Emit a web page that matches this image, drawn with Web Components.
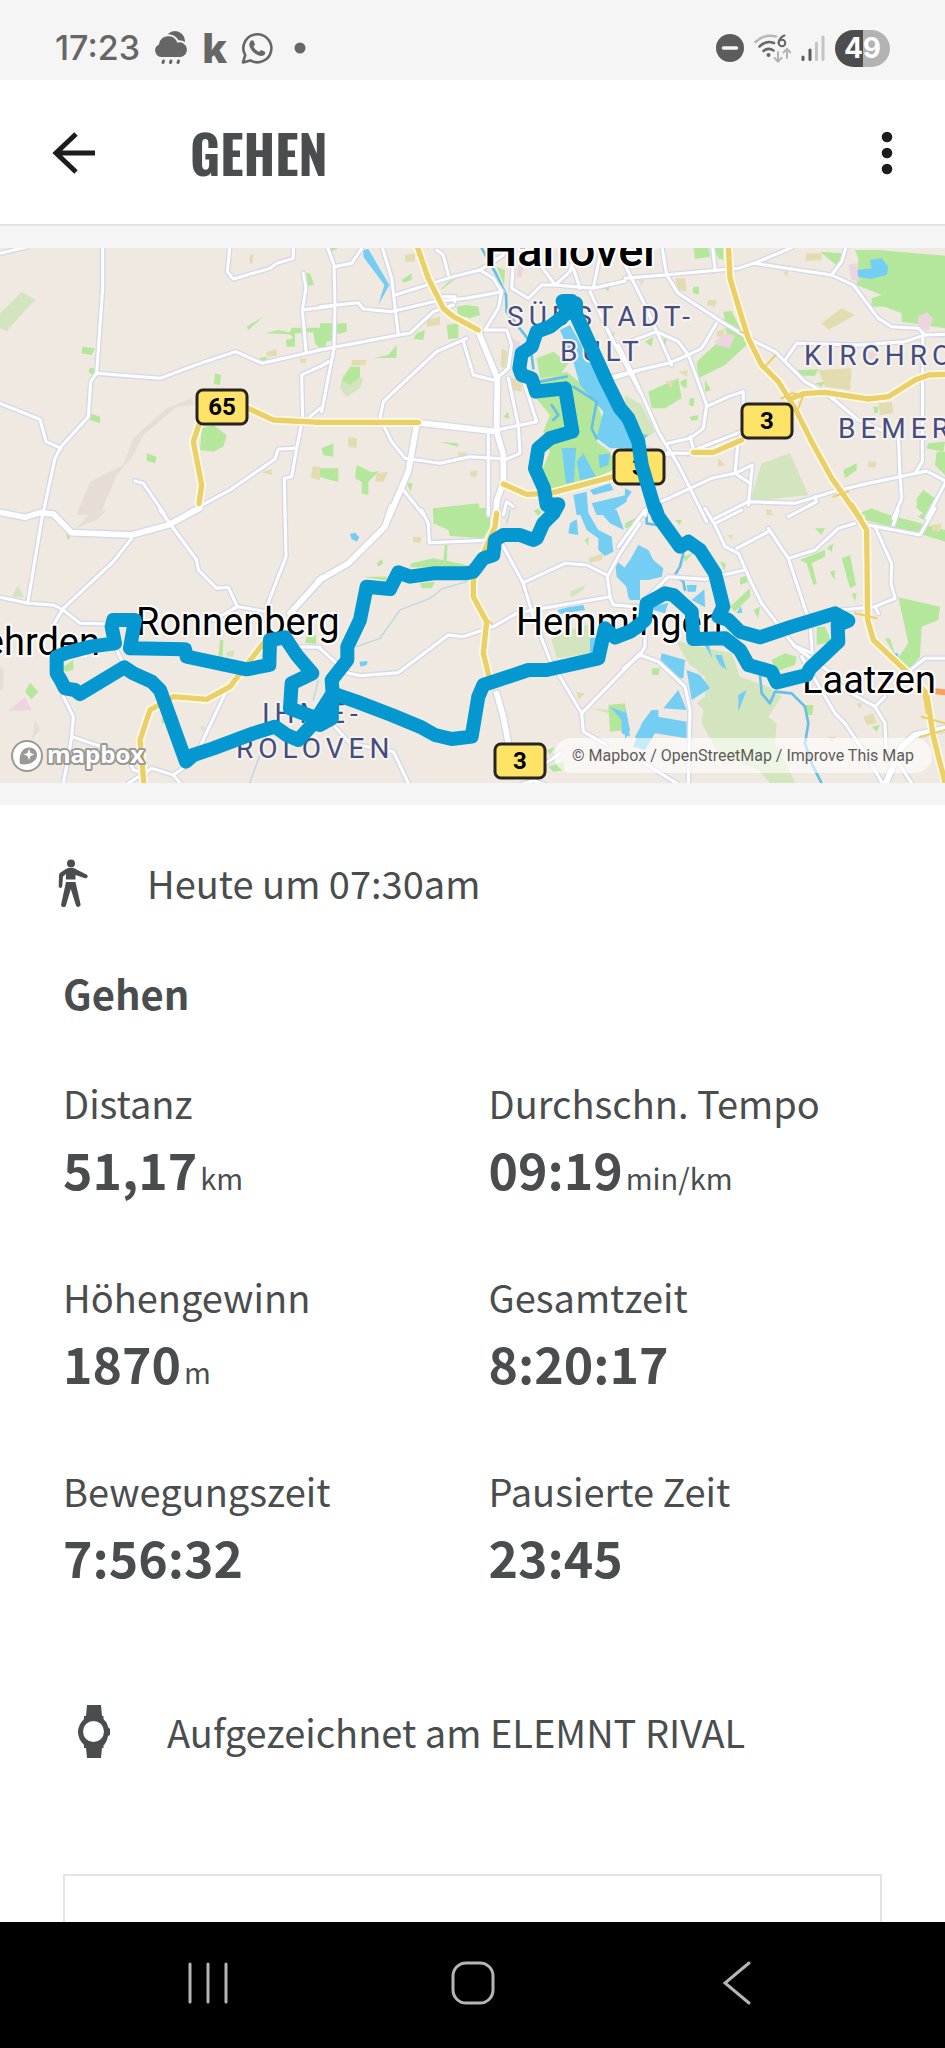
<!DOCTYPE html>
<html lang="de">
<head>
<meta charset="utf-8">
<meta name="viewport" content="width=device-width, initial-scale=1">
<title>Gehen</title>
<style>
    body {
        margin: 0;
        background: #fff;
        color: #4a4d4e;
        font-family: "Noto Sans CJK SC", "Noto Sans", sans-serif;
    }
</style>
</head>
<body>
<workout-page>
    <status-bar slot="status" time="17:23" battery="49"></status-bar>
    <app-bar slot="top">Gehen</app-bar>
    <route-map slot="map"></route-map>

    <icon-row icon="walk">Heute um 07:30am</icon-row>
    <workout-title>Gehen</workout-title>
    <stat-grid>
        <stat-item label="Distanz" unit="km">51,17</stat-item>
        <stat-item label="Durchschn. Tempo" unit="min/km">09:19</stat-item>
        <stat-item label="Höhengewinn" unit="m">1870</stat-item>
        <stat-item label="Gesamtzeit">8:20:17</stat-item>
        <stat-item label="Bewegungszeit">7:56:32</stat-item>
        <stat-item label="Pausierte Zeit">23:45</stat-item>
    </stat-grid>
    <icon-row icon="watch" class="device">Aufgezeichnet am ELEMNT RIVAL</icon-row>
    <peek-card></peek-card>

    <nav-bar slot="nav"></nav-bar>
</workout-page>

<script>
function attach(el, html) {
    const template = document.createElement('template');
    template.innerHTML = html;
    el.attachShadow({mode: 'open'});
    el.shadowRoot.appendChild(template.content.cloneNode(true));
}

class WorkoutPage extends HTMLElement {
    constructor() {
        super();
        attach(this, `
    <style>
    :host {
        display: flex;
        flex-direction: column;
        height: 100vh;
        overflow: hidden;
    }

    .map {
        background: #f5f5f5;
        padding: 22px 0;
    }

    main {
        display: flex;
        flex-direction: column;
        flex: 1;
        min-height: 0;
        overflow: hidden;
        padding: 50px 63px 0;
    }

    ::slotted(.device) {
        --icon-box: 62px;
        --icon-gap: 42px;
        margin-top: 113px;
    }
    </style>

    <slot name="status"></slot>
    <slot name="top"></slot>
    <div class="map"><slot name="map"></slot></div>
    <main><slot></slot></main>
    <slot name="nav"></slot>
`);
    }
}

class StatusBar extends HTMLElement {
    constructor() {
        super();
        attach(this, `
    <style>
    :host {
        display: flex;
        flex: none;
        justify-content: space-between;
        align-items: center;
        box-sizing: border-box;
        height: 80px;
        padding: 16px 55px 0;
        background: #f5f5f5;
        color: #666;
        font: 500 34px/40px Inter, sans-serif;
    }

    div {
        display: flex;
        align-items: center;
    }

    .left { gap: 14px; }
    .right { gap: 10px; }

    .k {
        font: 800 38px/40px "Open Sans", sans-serif;
    }

    .battery {
        justify-content: center;
        width: 55px;
        height: 37px;
        border-radius: 19px;
        background: linear-gradient(90deg, #4d4d4d 50%, #b3b3b3 50%);
        color: #fff;
        font-weight: 700;
        font-size: 28px;
    }
    </style>

    <div class="left">
        <span class="time"></span>
        <svg width="34" height="36" viewBox="0 0 34 36" fill="#666">
            <circle cx="21" cy="11" r="10"/>
            <path stroke="#f5f5f5" stroke-width="2" d="M8 28a7.500 7.500 0 0 1-4-14 10.500 10.500 0 0 1 20-2.500 8 8 0 0 1 3 16.500z"/>
            <path stroke="#666" stroke-width="3" stroke-linecap="round" d="M9.500 31l-.5 1.500M17 31l-.5 1.500M24.500 31l-.5 1.500"/>
        </svg>
        <span class="k">k</span>
        <svg width="32" height="32" viewBox="0 0 32 32">
            <path fill="none" stroke="#666" stroke-width="2.600" stroke-linejoin="round" d="M2 30.500l2.200-7.300a14 14 0 1 1 5.200 5.200z"/>
            <path fill="#666" d="M9 10c1-2 3-2.300 3.500-1.200l1.300 3c.3 1-.2 1.600-1.300 2.800 1.300 2.600 3 4.200 5.600 5.300 1.300-1.600 1.700-2 2.700-1.600l3 1.500c1 .7.300 2.500-1 3.500-2 1.400-5 .6-8-1.200-3-2-5-4.500-6-7-.8-2-.6-3.700.2-5.100z"/>
        </svg>
        <svg width="26" height="12" viewBox="0 0 26 12"><circle cx="13" cy="6" r="5.500" fill="#666"/></svg>
    </div>
    <div class="right">
        <svg width="28" height="28" viewBox="0 0 28 28">
            <circle cx="14" cy="14" r="14" fill="#5c5c5c"/>
            <path stroke="#f5f5f5" stroke-width="3.500" stroke-linecap="round" d="M7.500 14h13"/>
        </svg>
        <svg width="37" height="30" viewBox="0 0 37 30" fill="none" stroke-width="2.500" stroke-linecap="round">
            <path stroke="#b8b8b8" d="M1.500 9Q10 .5 22 3.500"/>
            <path stroke="#666" d="M5.500 13.500Q12 7 20 10M9.500 18Q14 14 19.500 17.500"/>
            <circle cx="14.500" cy="22" r="2" fill="#666"/>
            <path stroke="#666" stroke-width="2" d="M30.500 2.500q-5 2-6 7"/>
            <circle cx="28" cy="10" r="3.300" stroke="#666" stroke-width="2"/>
            <path stroke="#b3b3b3" stroke-width="2" d="M24 19v9M20.500 25l3.500 3.500 3.500-3.500M33 25v-8.500M29.500 19.500l3.500-3.500 3.500 3.500"/>
        </svg>
        <svg width="24" height="28" viewBox="0 0 24 28" stroke-width="3" stroke-linecap="round">
            <path stroke="#5c5c5c" d="M2 23v2.500M9 16v9.500"/>
            <path stroke="#c4c4c4" d="M15.500 9v16.500M22 3v22.500"/>
        </svg>
        <div class="battery"></div>
    </div>
`);
        this.shadowRoot.querySelector('.time').innerText = this.getAttribute('time');
        this.shadowRoot.querySelector('.battery').innerText = this.getAttribute('battery');
    }
}

class AppBar extends HTMLElement {
    constructor() {
        super();
        attach(this, `
    <style>
    :host {
        display: flex;
        flex: none;
        align-items: center;
        box-sizing: border-box;
        height: 146px;
        padding: 2px 34px 0 48px;
        border-bottom: 2px solid #e4e4e4;
        background: #fff;
    }

    button {
        display: flex;
        padding: 0;
        border: 0;
        background: none;
    }

    h1 {
        flex: 1;
        margin: 0 0 0 94px;
        font: 700 52px/64px Oswald, "Roboto Condensed", "Liberation Sans Narrow", sans-serif;
        text-transform: uppercase;
    }
    </style>

    <button aria-label="Zurück">
        <svg width="48" height="48" viewBox="0 0 48 48" fill="none" stroke="#1c1c1c" stroke-width="5">
            <path d="M47 24H9M28 5L8 24l20 19"/>
        </svg>
    </button>
    <h1><slot></slot></h1>
    <button aria-label="Mehr">
        <svg width="48" height="48" viewBox="0 0 48 48" fill="#1c1c1c">
            <circle cx="24" cy="8" r="5.300"/>
            <circle cx="24" cy="24" r="5.300"/>
            <circle cx="24" cy="40" r="5.300"/>
        </svg>
    </button>
`);
    }
}

// Map tiles. x/y is the tile origin on the map, points are in thirds of a map pixel.
const TILES = [
    {
        x: 0, y: 235,
        hill: ['575,490 500,520 400,610 370,690 270,740 230,840 300,840 350,720 400,660 430,600 530,515 580,510'],
        light: ['65,172 108,195 95,205 20,288 0,280 0,235'],
        green: [
            '247,335 285,340 275,360 245,355', '268,535 300,545 300,565 270,555', '268,400 282,398 280,420 266,412',
            '605,580 640,570 680,600 670,635 640,650 600,645', '645,415 663,420 660,450 642,447',
            '440,655 470,665 465,685 440,677', '740,275 790,245 745,285',
            '795,295 835,285 870,292 875,278 960,278 960,340 945,325 940,292 885,295 885,335 860,335 858,315 880,310 870,298',
            '918,115 930,115 942,150 925,152', '780,368 800,365 800,378 780,378'
        ],
        olive: ['800,350 830,342 830,362 800,365', '785,712 815,702 815,720', '938,695 960,695 960,735 932,728', '750,60 760,58 758,85 748,85', '900,370 920,372 915,385 902,385'],
        minor: [
            '0,55 80,36', '308,30 308,160 290,415 272,440 265,545 183,635 165,670 128,840',
            '290,415 480,430 600,385 707,350 787,385 960,345', '0,505 120,553 138,620 183,640',
            '690,30 682,110 700,132 810,100 830,85 880,70 880,30', '910,115 918,160 907,225 918,348',
            '907,225 1005,212', '980,385 905,420 908,550 890,640 875,725 853,730 855,840',
            '890,640 835,642 825,672 690,765 560,835', '405,738 430,745 495,840', '960,520 930,545'
        ],
        yellow: ['740,518 820,555 960,562', '600,560 580,620 605,750 597,805']
    },
    {
        x: 320, y: 235,
        light: ['70,420 130,430 120,460 80,485 60,460', '655,430 740,410 790,470 700,450'],
        green: [
            '0,265 80,265 80,290 40,300 40,315 20,320 15,340 0,335', '90,395 120,395 120,425 90,450 65,435',
            '160,370 205,360 230,330 230,368', '380,270 415,265 415,310 385,312', '290,295 315,285 310,315 280,312',
            '245,135 275,115 275,135 250,143', '110,690 155,712 178,708 145,740 145,780 125,775 125,740 105,730',
            '0,700 55,700 55,740 30,735 0,725', '340,820 475,805 485,840 340,840',
            '410,215 440,210 475,215 480,240 450,250 415,240', '650,370 700,350 745,385 720,420 660,430',
            '360,620 415,625 415,635', '5,640 40,625 40,665 10,660', '550,545 565,530 567,552', '25,39 55,39 35,50',
            '530,95 555,105 552,150', '860,300 885,290 880,308 862,308', '360,165 385,140 410,130 370,160', '845,155 870,152 865,168',
            '640,450 740,410 800,460 830,500 850,560 830,620 870,650 890,700 800,740 690,780 660,720 690,650 670,590 690,540 640,480',
            '260,745 278,745 272,770', '640,830 655,820 665,835'
        ],
        olive: [
            '95,375 140,375 135,390 95,392', '85,605 110,610 110,640 85,635', '170,715 205,710 190,740 165,740',
            '255,60 285,55 285,80 255,80', '450,710 472,705 470,725 452,725', '545,340 562,350 555,400 542,395',
            '320,255 360,245 360,270 320,275', '570,425 605,440 605,470 575,465', '415,652 440,652 440,670 415,670'
        ],
        pink: ['595,90 610,95 605,125 590,125', '565,305 600,320 600,345 575,340'],
        water: [
            '130,45 145,42 208,150 175,210 193,150 130,65', '720,285 750,270 960,640 870,640 830,610 850,530 780,450 760,380',
            '725,640 768,638 762,740 738,745', '770,680 790,655 828,725 780,735', '835,660 870,655 865,690 840,700',
            '760,780 800,770 805,840 770,840', '810,765 870,745 880,765 820,780', '815,805 918,780 920,800 860,840 830,840'
        ],
        stream: ['485,39 530,120 558,180 560,230 630,320 640,400', '695,510 715,540 700,555', '760,455 830,500 815,580 830,610', '660,440 740,425'],
        minor: [
            '20,30 42,90 45,210 42,340 5,530', '42,95 95,85 125,40', '0,215 115,203 130,222 215,230 340,200 440,190 545,170',
            '185,30 215,130 235,300', '0,345 235,300 270,295 340,230 400,210', '225,180 400,125 480,105 550,60',
            '350,45 370,60 385,120', '370,185 405,185 405,200', '480,105 520,130 545,170', '575,160 625,190 665,150 705,150',
            '580,80 575,160', '705,150 750,110 770,30', '640,60 665,95 705,150', '705,150 820,160 915,138', '820,160 840,60',
            '760,100 780,160', '545,170 535,220 495,285 560,285 575,330 565,400 530,430',
            '440,310 350,350 190,500 180,550 215,620 255,670 360,685 450,665 560,672 600,655 595,570 565,430',
            '430,320 460,420 520,435', '595,390 650,560 530,585', '505,590 505,840', '0,395 25,380', '250,765 310,840',
            '810,170 870,300 960,470', '880,430 960,405', '580,815 560,800 550,840'
        ],
        major: ['475,290 532,430 530,590 550,660 550,740 530,800 528,840', '290,563 530,590', '290,570 265,710 205,850'],
        yellow: ['290,30 325,130 370,220 400,245 475,285', '-10,562 295,562', '550,747 620,778 690,775 880,725']
    },
    {
        x: 625, y: 235,
        light: ['0,480 50,510 90,590 60,610 0,560', '410,685 495,655 550,780 375,800'],
        green: [
            '205,30 250,30 255,65 210,72', '265,30 295,30 295,75 280,70',
            '295,230 320,228 345,280 362,300 365,330 300,390 220,430 215,380 270,330 305,300',
            '700,70 690,45 760,45 960,62 960,280 830,260 830,235 780,215 740,215 740,190 770,180 695,150',
            '205,155 222,155 222,178 203,175', '70,470 160,430 170,490 120,520 80,520', '655,705 695,685 695,705 660,730',
            '875,790 895,765 930,790 900,840 875,820', '935,650 960,650 960,720 930,690', '520,405 580,403 570,422 520,422',
            '635,430 660,425 660,455 640,450', '195,545 220,540 218,555 198,557', '240,435 258,465 240,470',
            '910,625 960,620 955,650 905,640', '690,840 740,820 790,840', '570,445 600,440 590,455', '195,490 208,490 205,515 192,510',
            '60,320 85,305 80,335', '108,315 125,310 120,340', '165,440 185,430 185,460 172,455', '745,515 760,515 758,535 748,535',
            '585,50 650,55 640,95'
        ],
        olive: [
            '590,265 650,220 690,240 610,285', '545,55 590,55 590,75 540,78', '250,195 275,195 270,215 245,210',
            '150,130 180,130 185,170 160,165', '580,405 680,400 675,465 600,455', '760,505 800,500 805,535 765,540',
            '730,680 755,680 750,698 728,695', '280,670 300,690 278,695', '160,410 190,405 185,425', '120,440 145,435 140,460',
            '275,290 300,280 295,305 275,305', '425,820 445,840 425,840', '475,110 490,108 485,128'
        ],
        pink: ['268,320 300,295 330,300 315,340 275,330', '670,90 695,85 705,140 680,135', '878,245 905,232 925,250 910,288 880,270', '730,350 760,350 750,375 728,370', '40,135 60,135 50,155'],
        water: ['697,105 740,100 735,75 770,70 790,95 785,120 735,132 700,125', '0,590 70,600 50,620 30,690 0,640', '0,760 20,770 0,800'],
        minor: [
            '0,130 120,120 340,100 400,80 500,38', '0,90 60,210 140,390', '110,30 125,120 160,175 290,260 390,320 450,350 540,440 610,480 700,555 780,590',
            '262,30 270,100', '390,85 620,120 685,150 760,250 800,275 880,280 900,300 960,298', '620,120 650,80 665,30',
            '0,325 95,290 160,320 190,360 245,510 235,580 195,610 130,625', '275,265 230,340 190,360 130,385 20,410 -60,430',
            '-20,330 20,410 100,590 160,690 245,860', '245,515 310,485 355,470 355,510', '120,655 200,655 220,640 350,590',
            '195,605 205,640', '480,375 515,325 700,330 840,320 900,300', '893,300 892,680 870,715', '820,600 825,720 830,790 805,850',
            '975,745 905,708 825,725 730,745 625,770 510,805 370,800 270,850', '60,840 70,815 130,790 260,730 330,715 382,690 370,810',
            '340,610 330,715 375,745', '960,745 905,850', '570,785 575,800 490,845', '60,640 130,660'
        ],
        yellow: [
            '310,30 315,130 345,230 370,310 410,390 460,440 510,520 560,620 620,730 705,850',
            '500,490 540,475 600,472 730,492 790,485 870,435 910,420 960,418', '205,652 265,652 350,615'
        ],
        ramp: ['420,395 452,360', '470,490 500,475 535,480 520,520', '345,290 370,300', '625,785 670,770']
    },
    {
        x: 0, y: 510,
        hill: ['230,55 270,10 320,0 290,30', '105,630 120,660 95,690', '0,470 12,480 8,540 0,540'],
        light: ['40,250 55,228 72,260 40,262', '680,425 705,420 700,440 680,440', '600,650 615,648 610,665'],
        green: ['90,518 115,545 95,568 75,545', '190,470 220,450 220,480 195,485', '485,620 500,640 485,640', '198,70 210,80 203,90', '920,380 948,375 948,402 915,398', '660,390 670,390 668,440 655,440'],
        pink: ['75,560 95,600 25,603'],
        minor: [
            '128,12 83,280', '0,262 85,280 160,285 190,300 240,340 325,342', '395,85 340,155 190,295 163,340 160,390',
            '480,0 590,150 595,180 650,235 685,232 712,290 800,305', '712,290 640,330', '855,0 858,140 800,290',
            '870,410 960,412', '190,560 220,620 215,680 205,740 190,820', '215,680 320,715 385,745 400,780 440,790', '680,540 600,710',
            '385,820 455,775 520,795 545,825', '520,795 555,770', '350,420 370,460'
        ],
        brook: ['955,510 940,570', '800,680 748,822'],
        major: ['-10,5 75,22 120,8 160,12 215,68 395,75 505,45 600,-6', '965,205 870,310'],
        yellow: ['432,825 420,690 450,600 520,560 620,568 690,530 790,400']
    },
    {
        x: 320, y: 510,
        light: ['710,370 820,340 815,430 710,445 695,390', '750,245 795,225 790,240 755,262', '810,595 870,600 865,610'],
        green: [
            '340,-6 510,-6 510,50 490,85 390,78 385,60 340,40', '130,200 200,200 200,212', '275,160 340,145 440,165 440,175 270,172',
            '375,105 382,105 380,160 370,150', '170,160 185,148 190,160 175,170', '300,220 345,215 335,235 305,235',
            '865,585 915,580 920,660 870,665', '685,770 730,755 735,780 700,785', '640,0 665,5 655,18', '915,45 950,25 945,45 920,55',
            '680,720 705,710 690,735', '795,90 805,80 805,108'
        ],
        olive: ['805,145 850,130 845,150 810,158', '280,80 305,82 300,100 278,95', '770,545 795,550 775,570'],
        water: [
            '90,72 105,68 118,82 110,95 95,88', '118,455 143,453 140,465 122,470', '750,40 770,28 775,75 745,70',
            '775,0 800,0 835,60 875,80 880,125 855,138 835,120 835,85 800,60', '835,0 890,0 912,60 870,40',
            '885,150 935,190 960,110 960,270 930,270 920,230 890,200', '712,300 745,292 790,285 795,300 720,312',
            '810,385 850,380 850,440 810,430', '870,590 920,610 930,680 905,670 905,630', '945,680 960,655 960,700'
        ],
        minor: [
            '305,0 325,40 328,98 520,90', '545,100 610,220 640,320 690,450 785,610 790,665 860,705', '610,218 735,160 800,165 860,195',
            '960,40 900,130 862,200 870,260 880,285 950,290', '870,260 640,300 590,310 520,350 430,380 385,375 235,488 120,497 80,488 0,415',
            '785,610 960,430', '45,650 90,700 220,725 268,825', '670,765 720,730', '600,825 640,812 680,825'
        ],
        brook: ['110,410 180,385 240,300 330,265 370,235 440,215', '570,0 560,40'],
        major: ['215,-10 195,50 85,160 -5,212', '530,550 550,620 565,700'],
        yellow: ['530,10 525,50 490,130 460,210 460,260 500,335 490,430 512,520'],
        ramp: ['490,320 515,340']
    },
    {
        x: 625, y: 510,
        light: ['150,390 200,405 320,430 345,500 430,530 470,560 430,620 455,640 450,700 515,825 440,825 400,780 280,730 230,640 235,600 215,580 240,560 240,500 190,460'],
        green: [
            '720,5 740,0 960,60 960,95 880,70 720,30', '820,262 945,290 940,330 890,350 885,440 850,480 815,450 850,400',
            '440,450 480,430 515,440 510,465 450,485', '575,350 600,350 620,395 575,405', '315,290 375,235 375,260 330,305',
            '525,150 600,120 600,140 560,160 575,220 565,225 545,160', '650,145 675,135 693,225 675,235', '570,55 600,55 590,75',
            '605,115 625,100 620,125', '615,185 630,180 628,210', '680,250 695,250 690,275', '540,585 565,585 562,615 545,615',
            '345,205 365,195 370,215 345,225', '780,385 795,385 812,440', '385,300 405,290 400,325', '80,475 105,475 100,495 82,495',
            '0,40 30,25 30,35 0,55', '880,20 905,0 895,30', '740,650 765,645 755,665', '150,30 170,30 165,45', '285,155 302,160 298,182', '175,140 205,130 180,155'
        ],
        olive: ['715,620 745,610 755,640 725,645', '920,45 950,40 945,65 920,60', '305,75 325,75 320,88', '425,0 440,0 435,20', '695,580 712,580 705,598', '610,680 635,680 620,695'],
        water: [
            '15,150 40,105 70,120 85,150 115,175 110,200 70,210 30,210 45,240 40,270 10,265 0,200 0,170', '185,225 215,225 212,245 188,245',
            '200,270 238,238 240,292', '80,290 130,278 120,310 85,300', '110,430 180,450 175,505 140,505 135,480 105,455',
            '160,540 185,600 115,595', '80,600 100,600 100,620 185,635 185,685 90,670 60,720 25,710 50,640',
            '185,480 225,495 255,535 200,570 190,510', '235,400 252,405 262,445', '270,435 290,435 305,480 285,465',
            '0,590 15,660 0,690', '340,555 365,540 340,605', '335,310 348,288 352,308', '798,430 820,430 818,445'
        ],
        stream: ['405,495 410,550 435,580 450,545 500,550 540,590 550,640 540,700 560,760 590,820', '175,130 165,170 150,195 175,215 180,240', '65,0 65,40 95,45 100,30'],
        minor: [
            '240,-5 270,45 300,110 340,130 380,220 410,280 510,410 620,490 660,540 750,590 780,640 785,750', '270,40 350,0', '335,115 430,65',
            '430,55 490,145 555,340 562,430 515,410', '490,145 570,120 640,55 690,40', '730,45 885,75 930,-5', '805,45 820,0',
            '750,50 800,160 798,220 810,265 750,290 650,300', '60,0 -20,110', '60,270 130,200 240,208 360,180',
            '60,340 60,410 45,435 100,455 180,530 195,600 190,825', '45,435 -5,475', '50,755 155,820', '530,440 630,610 660,640 720,730 775,825',
            '750,290 760,310', '750,590 780,560', '960,445 900,445 850,485', '815,750 860,820'
        ],
        major: ['965,655 870,675 830,710 780,825'],
        orange: ['925,543 960,547'],
        yellow: ['680,-15 725,60 728,330 745,390 840,480 905,550 925,680 962,825'],
        ramp: ['690,310 755,325', '890,620 960,640', '885,680 960,660', '895,550 905,610']
    }
];

// Recorded track, one run of points per tile.
const TRACK = [
    [320, 235, '860,440 768,240 768,205 755,215 740,230 728,198 755,198 765,215 728,245 690,275 650,290 635,335 605,355 598,400 605,420 635,430 648,470 735,460 757,590 690,610 655,640 645,700 672,760 680,810 715,808 700,835'],
    [320, 510, '700,10 670,40 650,85 640,90 600,75 550,75 525,90 520,135 490,145 460,185 440,190 340,190 270,200 235,187 210,237 140,230 120,330 82,410 82,450 35,510 38,550 35,625 0,645'],
    [0, 510, '995,625 940,640 895,690 860,675 825,650 760,670 640,715 580,735 558,755 520,650 515,635 480,540 455,515 400,490 373,472 240,552 225,540 195,535 182,510 170,490 170,440 200,428 270,410 345,400 335,350 340,330 405,330 390,415 555,418 560,440 740,478 808,465 810,390 855,382 890,435 937,490 875,520 870,595 950,625 998,550'],
    [320, 510, '38,550 110,575 215,615 300,650 345,675 395,687 455,680 475,560 490,525 625,480 680,480 835,445 855,355 885,382 935,362 960,345'],
    [625, 510, '-30,382 15,365 60,330 65,280 120,250 145,255 200,305 205,387 300,385 345,420 370,465 440,485 455,517 545,495 555,475 640,395 638,345 670,332 630,310 500,350 405,382 345,365 310,330 280,320 295,290 270,190 225,120 190,95 165,110 100,20 90,-10'],
    [625, 235, '90,825 50,690 40,620 10,550 -15,520 -55,440 -150,230']
];

function layer(name, stroked) {
    return '<g class="' + name + '">' + TILES.map(tile =>
        `<g transform="translate(${tile.x} ${tile.y}) scale(.33333)">` +
        (tile[name.split(' ')[0]] || []).map(points =>
            stroked ? `<polyline points="${points}"/>` : `<polygon points="${points}"/>`
        ).join('') + '</g>'
    ).join('') + '</g>';
}

function shield(x, y, number) {
    return `<g class="shield"><rect x="${x - 25}" y="${y - 17}" width="50" height="34" rx="6"/>
        <text x="${x}" y="${y + 8}">${number}</text></g>`;
}

class RouteMap extends HTMLElement {
    constructor() {
        super();
        attach(this, `
    <style>
    :host {
        display: block;
        position: relative;
    }

    .canvas {
        display: block;
        width: 100%;
        height: auto;
        background: #efe9e1;
    }

    polyline {
        fill: none;
        stroke-linejoin: round;
        stroke-linecap: round;
    }

    .hill { fill: #e6ddd7; }
    .light { fill: #d2e5bf; }
    .green { fill: #b4e79b; }
    .olive { fill: #e3dcb0; }
    .pink { fill: #ecd5de; }
    .water { fill: #74cdf2; }
    .stream { stroke: #68bfe6; stroke-width: 8; }
    .brook { stroke: #b9d8e4; stroke-width: 4; }
    .minor { stroke: #fff; stroke-width: 9; }
    .minor.case { stroke: #d5d8e9; stroke-width: 17; }
    .major { stroke: #fff; stroke-width: 17; }
    .major.case { stroke: #d5d8e9; stroke-width: 25; }
    .yellow { stroke: #ebcf68; stroke-width: 16; }
    .yellow.case { stroke: #fffbe6; stroke-width: 26; }
    .ramp { stroke: #ebcf68; stroke-width: 6; }
    .orange { stroke: #fba063; stroke-width: 18; }
    .track { stroke: #0598d0; stroke-width: 42; }

    text {
        font-family: Roboto, sans-serif;
        paint-order: stroke;
        stroke: #fff;
        stroke-width: 4px;
        stroke-linejoin: round;
    }

    .city { font-weight: 500; font-size: 47px; }
    .town { font-size: 38px; }
    .district { font-size: 28px; fill: #454c7f; letter-spacing: 5px; stroke: #f6f2ee; }

    .shield rect { fill: #ffe366; stroke: #26241c; stroke-width: 3; }
    .shield text { font-size: 24px; font-weight: 700; text-anchor: middle; stroke: none; }

    .logo {
        position: absolute;
        left: 11px;
        bottom: 9px;
        display: flex;
    }

    .logo text {
        font: 700 24px "Open Sans", sans-serif;
        fill: #fff;
        stroke: #9b9994;
        stroke-width: 4px;
    }

    .credit {
        position: absolute;
        right: 13px;
        bottom: 10px;
        padding: 0 18px;
        border-radius: 18px;
        background: rgba(255, 255, 255, .6);
        color: #5f5c59;
        font: 16px/35px Roboto, sans-serif;
        white-space: nowrap;
    }

    .credit a {
        color: inherit;
        text-decoration: none;
    }
    </style>

    <svg class="canvas" viewBox="0 248 945 535" role="img" aria-label="Karte der Route">
        ${layer('hill')}${layer('light')}${layer('green')}${layer('olive')}${layer('pink')}${layer('water')}
        ${layer('stream', true)}${layer('brook', true)}
        ${layer('minor case', true)}${layer('major case', true)}${layer('minor', true)}${layer('major', true)}
        ${layer('yellow case', true)}${layer('ramp', true)}${layer('yellow', true)}${layer('orange', true)}
        <text class="city" x="484" y="266">Hanover</text>
        <text class="district" x="507" y="326">SÜDSTADT-</text>
        <text class="district" x="560" y="361">BULT</text>
        <text class="district" x="804" y="365">KIRCHRO</text>
        <text class="district" x="838" y="438">BEMER</text>
        <text class="district" x="262" y="723">IHME-</text>
        <text class="district" x="236" y="758">ROLOVEN</text>
        <text class="town" x="100" y="655" text-anchor="end">ehrden</text>
        <text class="town" x="136" y="635">Ronnenberg</text>
        <text class="town" x="516" y="635">Hemmingen</text>
        <text class="town" x="802" y="693">Laatzen</text>
        ${shield(222, 407, 65)}${shield(767, 421, 3)}${shield(639, 467, 3)}${shield(520, 761, 3)}
        <g class="track">
            ${TRACK.map(([x, y, points]) => `<g transform="translate(${x} ${y}) scale(.33333)"><polyline points="${points}"/></g>`).join('')}
        </g>
    </svg>

    <a class="logo" href="#mapbox" aria-label="Mapbox">
        <svg width="150" height="36" viewBox="0 0 150 36">
            <circle cx="16" cy="18" r="15" fill="#fff" stroke="#9b9994" stroke-width="2"/>
            <path fill="#9b9994" d="M9 26c-1-6 0-11 3-14 4-4 11-3 13 1s1 8-2 10c-3 3-8 4-14 3z"/>
            <path fill="#fff" d="M18 11l1.500 4 4 1.500-4 1.500-1.500 4-1.500-4-4-1.500 4-1.500z"/>
            <text x="36" y="25">mapbox</text>
        </svg>
    </a>
    <div class="credit">© <a href="#mapbox">Mapbox</a> / <a href="#osm">OpenStreetMap</a> / <a href="#improve">Improve This Map</a></div>
`);
    }
}

const ICONS = {
    walk: `<svg width="30" height="48" viewBox="0 0 30 48" fill="#4a4d4e">
        <circle cx="13" cy="4.500" r="4"/>
        <path d="M8 20.500V15l-3 2.500-.8 10a1.800 1.800 0 0 1-3.500 0L1 16q.2-1.500 1.500-2.500L8 10q1.500-1 3-1h4q2 0 3.500 1.500l10 5a2 2 0 0 1-1.500 3.700L17.500 16v4.500z"/>
        <path d="M8 23h9.500l5 22a2.400 2.400 0 0 1-4.600 1.300L12.800 30 8 46.300A2.400 2.400 0 0 1 3.200 45z"/>
    </svg>`,
    watch: `<svg width="34" height="54" viewBox="0 0 34 54">
        <path fill="#4a4d4e" d="M10 0h14l1 11h1.500v3q3.500 3 4.500 8l2 2v6l-2 1q-1 6-4.500 9.500V43H25l-1 10H10L9 43H7v-3Q1 34 1 27T7 14v-3h2z"/>
        <circle cx="16.500" cy="26.500" r="10.500" fill="#fff"/>
    </svg>`
};

class IconRow extends HTMLElement {
    constructor() {
        super();
        attach(this, `
    <style>
    :host {
        display: flex;
        align-items: center;
        font-size: 38px;
        line-height: 56px;
    }

    .icon {
        display: flex;
        justify-content: center;
        width: var(--icon-box, 20px);
        margin-right: var(--icon-gap, 64px);
    }

    svg { flex: none; }
    </style>

    <span class="icon">${ICONS[this.getAttribute('icon')]}</span>
    <span><slot></slot></span>
`);
    }
}

class WorkoutTitle extends HTMLElement {
    constructor() {
        super();
        attach(this, `
    <style>
    :host { display: block; }

    h2 {
        margin: 54px 0;
        font-size: 40px;
        line-height: 56px;
    }
    </style>

    <h2><slot></slot></h2>
`);
    }
}

class StatGrid extends HTMLElement {
    constructor() {
        super();
        attach(this, `
    <style>
    :host {
        display: grid;
        grid-template-columns: repeat(2, 1fr);
        row-gap: 66px;
        margin-right: -32px;
    }
    </style>

    <slot></slot>
`);
    }
}

class StatItem extends HTMLElement {
    constructor() {
        super();
        attach(this, `
    <style>
    :host { display: block; }

    .label {
        font-size: 38px;
        line-height: 56px;
    }

    .value {
        display: flex;
        align-items: baseline;
        gap: 3px;
        font-size: 50px;
        line-height: 74px;
    }

    b { font-weight: 700; }

    .unit {
        font-size: 29px;
        line-height: 36px;
    }

    :host { margin-bottom: -2px; }
    </style>

    <div class="label"></div>
    <div class="value"><b><slot></slot></b><span class="unit"></span></div>
`);
        this.shadowRoot.querySelector('.label').innerText = this.getAttribute('label');
        this.shadowRoot.querySelector('.unit').innerText = this.getAttribute('unit') || '';
    }
}

class PeekCard extends HTMLElement {
    constructor() {
        super();
        attach(this, `
    <style>
    :host {
        display: block;
        flex: 1;
        margin-top: 114px;
        border: 2px solid #e4e4e4;
        border-bottom: 0;
    }
    </style>

    <slot></slot>
`);
    }
}

class NavBar extends HTMLElement {
    constructor() {
        super();
        attach(this, `
    <style>
    :host {
        display: block;
        flex: none;
        background: #000;
    }

    nav {
        display: grid;
        grid-template-columns: repeat(3, 28%);
        justify-content: center;
        align-items: center;
        height: 122px;
        padding-bottom: 4px;
    }

    button {
        display: flex;
        justify-content: center;
        padding: 0;
        border: 0;
        background: none;
    }

    svg {
        fill: none;
        stroke: #b5b5b5;
        stroke-width: 3;
        stroke-linecap: round;
    }
    </style>

    <nav>
        <button aria-label="Letzte Apps"><svg width="48" height="48" viewBox="0 0 48 48"><path d="M6 5v38M24 5v38M42 5v38"/></svg></button>
        <button aria-label="Startseite"><svg width="48" height="48" viewBox="0 0 48 48"><rect x="4" y="4" width="40" height="40" rx="13"/></svg></button>
        <button aria-label="Zurück"><svg width="48" height="48" viewBox="0 0 48 48"><path d="M36 4L12 24l24 20"/></svg></button>
    </nav>
`);
    }
}

window.customElements.define('workout-page', WorkoutPage);
window.customElements.define('status-bar', StatusBar);
window.customElements.define('app-bar', AppBar);
window.customElements.define('route-map', RouteMap);
window.customElements.define('icon-row', IconRow);
window.customElements.define('workout-title', WorkoutTitle);
window.customElements.define('stat-grid', StatGrid);
window.customElements.define('stat-item', StatItem);
window.customElements.define('peek-card', PeekCard);
window.customElements.define('nav-bar', NavBar);
</script>
</body>
</html>
